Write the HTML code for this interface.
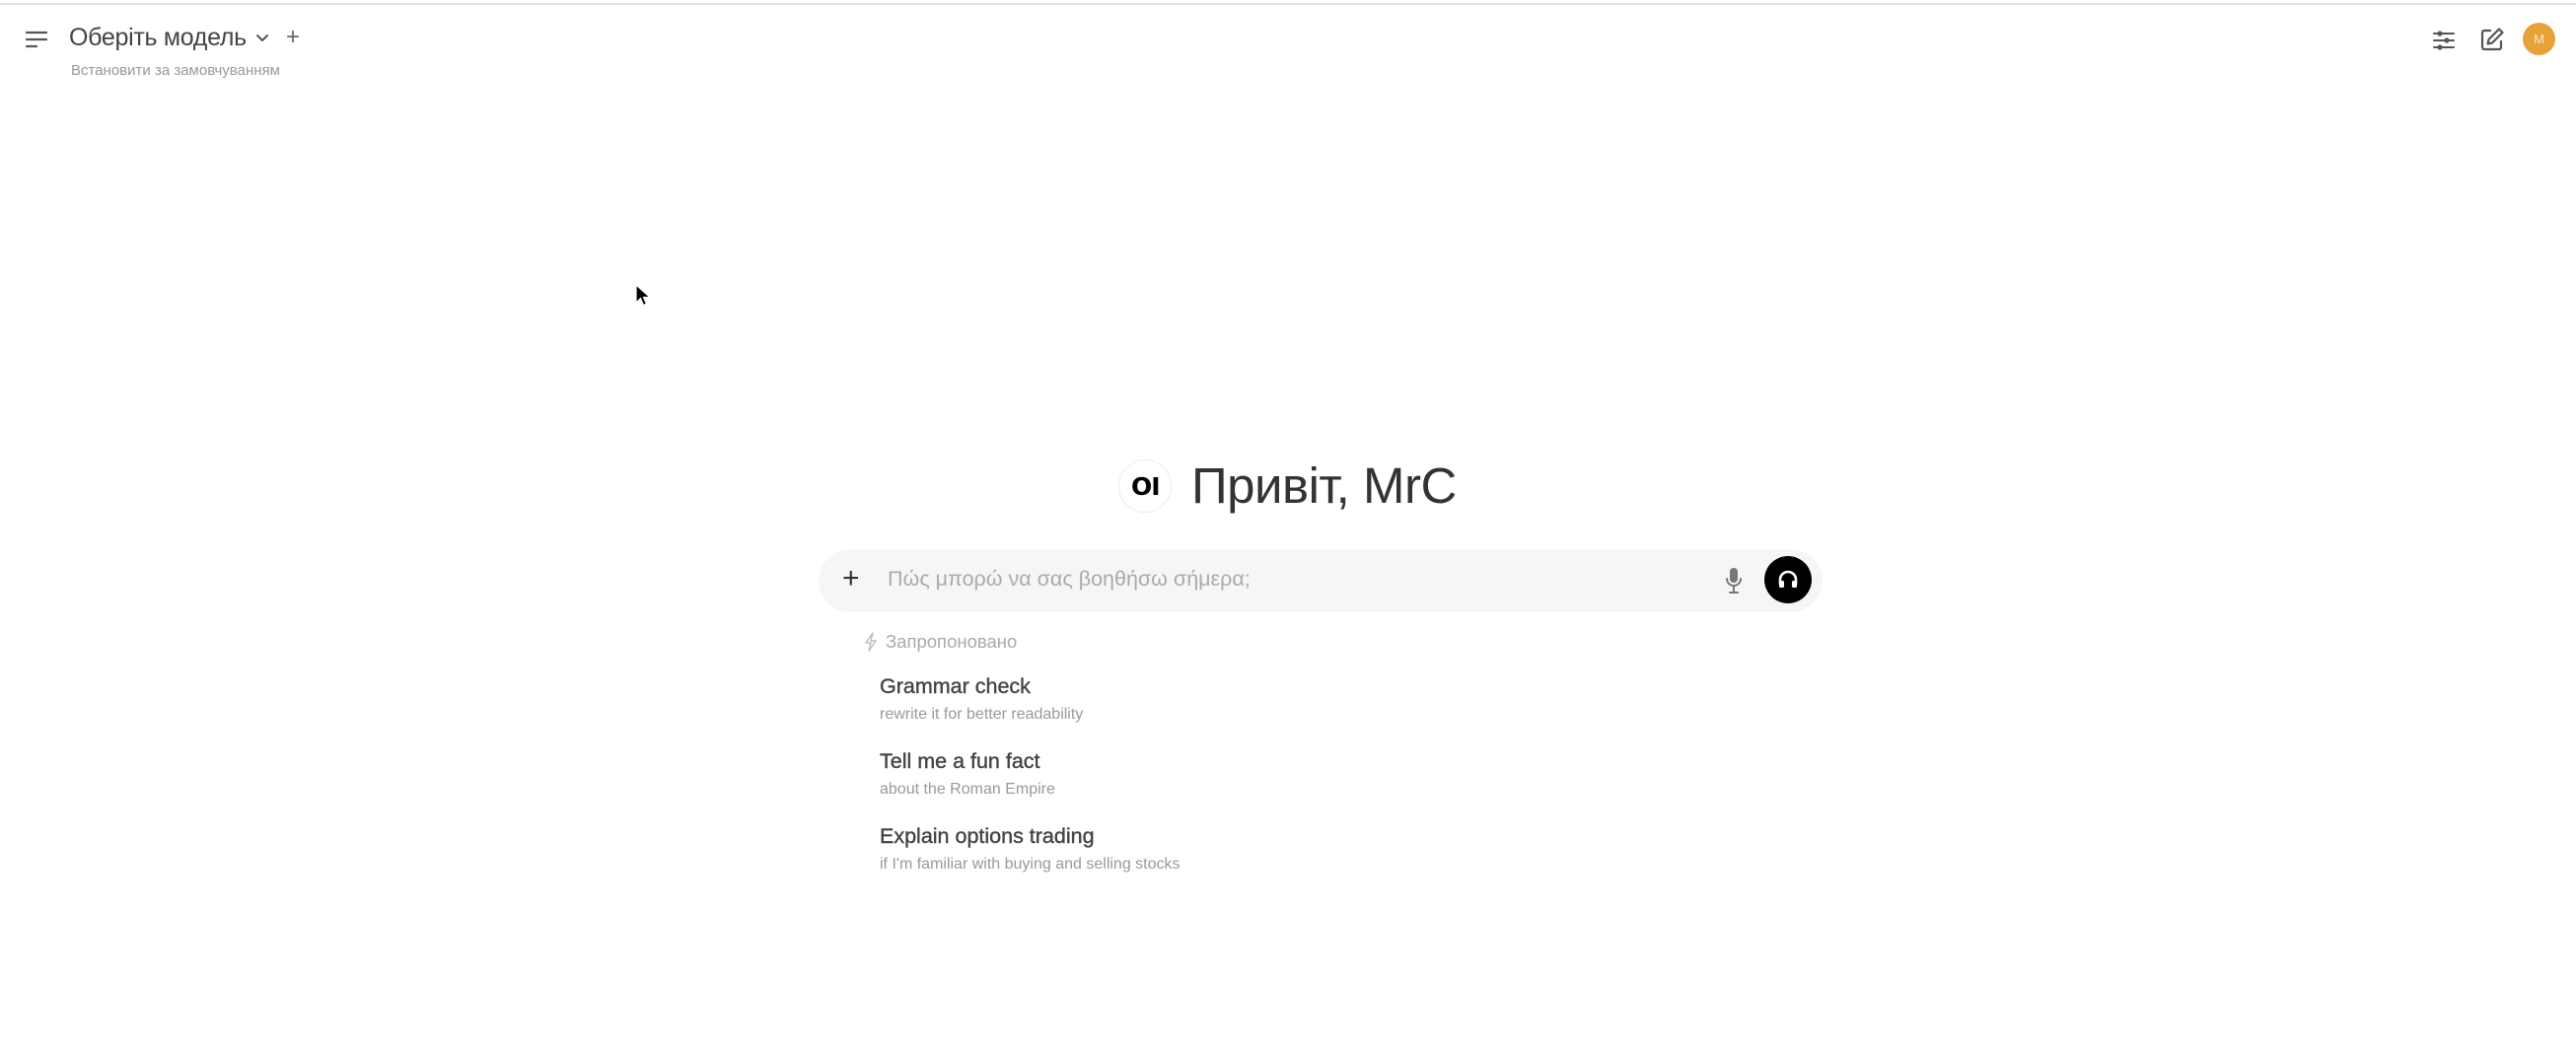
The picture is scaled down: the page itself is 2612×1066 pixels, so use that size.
<!DOCTYPE html>
<html><head><meta charset="utf-8"><style>
*{margin:0;padding:0;box-sizing:border-box}
body{width:2612px;height:1066px;background:#fff;position:relative;overflow:hidden;font-family:"Liberation Sans","DejaVu Sans",sans-serif}
.a{position:absolute}
</style></head><body>
<div class="a" style="left:0;top:3px;width:2612px;height:2px;background:#e3e3e3"></div>
<svg class="a" style="left:25px;top:29px" width="24" height="22" viewBox="0 0 24 22"><g stroke="#555" stroke-width="2.2" stroke-linecap="round"><line x1="2" y1="4" x2="22" y2="4"/><line x1="2" y1="11" x2="22" y2="11"/><line x1="2" y1="18" x2="12" y2="18"/></g></svg>
<div class="a" style="left:70px;top:24px;font-size:25px;color:#444;letter-spacing:-0.3px">Оберіть модель</div>
<svg class="a" style="left:258px;top:33px" width="16" height="12" viewBox="0 0 16 12"><path d="M3 3l5 5 5-5" fill="none" stroke="#555" stroke-width="2" stroke-linecap="round" stroke-linejoin="round"/></svg>
<div class="a" style="left:290px;top:24px;font-size:24px;color:#666">+</div>
<div class="a" style="left:72px;top:63px;font-size:15px;color:#999">Встановити за замовчуванням</div>

<svg class="a" style="left:2465px;top:28px" width="26" height="26" viewBox="0 0 26 26"><g stroke="#555" stroke-width="2" stroke-linecap="round"><line x1="3" y1="6" x2="23" y2="6"/><line x1="3" y1="13" x2="23" y2="13"/><line x1="3" y1="20" x2="23" y2="20"/></g><g fill="#555"><circle cx="9" cy="6" r="2.6"/><circle cx="16" cy="13" r="2.6"/><circle cx="9" cy="20" r="2.6"/></g></svg>
<svg class="a" style="left:2513px;top:26px" width="28" height="28" viewBox="0 0 28 28"><path d="M12 5H6a2 2 0 0 0-2 2v15a2 2 0 0 0 2 2h15a2 2 0 0 0 2-2v-6" fill="none" stroke="#555" stroke-width="2.2" stroke-linecap="round"/><path d="M21 3.5l3.5 3.5L14 17.5l-4.5 1 1-4.5z" fill="none" stroke="#555" stroke-width="2.2" stroke-linejoin="round"/></svg>
<div class="a" style="left:2558px;top:23px;width:33px;height:33px;border-radius:50%;background:#e8a23a;color:#fbe6c8;font-size:13px;text-align:center;line-height:33px">M</div>

<div class="a" style="left:1134px;top:466px;width:54px;height:54px;border-radius:50%;border:1.5px solid #ececec;background:#fff"></div>
<div class="a" style="left:1147px;top:479px;font-size:25px;font-weight:bold;color:#000;letter-spacing:-1px;font-family:'DejaVu Sans',sans-serif">OI</div>
<div class="a" style="left:1208px;top:463px;font-size:51px;color:#333;letter-spacing:-0.5px">Привіт, MrC</div>

<div class="a" style="left:830px;top:557px;width:1018px;height:64px;border-radius:32px;background:#f6f6f6"></div>
<div class="a" style="left:854px;top:570px;font-size:30px;color:#333">+</div>
<div class="a" style="left:900px;top:575px;font-size:21.5px;color:#aaa">Πώς μπορώ να σας βοηθήσω σήμερα;</div>
<svg class="a" style="left:1747px;top:574px" width="22" height="30" viewBox="0 0 22 30"><rect x="7" y="2" width="8" height="15" rx="4" fill="#777"/><path d="M4 13a7 7 0 0 0 14 0M11 20v6M7 27h8" fill="none" stroke="#777" stroke-width="2" stroke-linecap="round"/></svg>
<div class="a" style="left:1789px;top:564px;width:48px;height:48px;border-radius:50%;background:#000"></div>
<svg class="a" style="left:1800px;top:575px" width="26" height="26" viewBox="0 0 26 26"><path d="M5 18v-5a8 8 0 0 1 16 0v5" fill="none" stroke="#fff" stroke-width="2.6"/><rect x="4" y="14" width="5" height="7" rx="1.5" fill="#fff"/><rect x="17" y="14" width="5" height="7" rx="1.5" fill="#fff"/></svg>

<svg class="a" style="left:876px;top:641px" width="14" height="20" viewBox="0 0 14 20"><path d="M9 1L2 11h5l-2 8 7-10H7z" fill="none" stroke="#bbb" stroke-width="1.4" stroke-linejoin="round"/></svg>
<div class="a" style="left:898px;top:640px;font-size:18.5px;color:#aaa">Запропоновано</div>

<div class="a" style="left:892px;top:684px;font-size:21.5px;color:#444;-webkit-text-stroke:0.4px #444">Grammar check</div>
<div class="a" style="left:892px;top:716px;font-size:16px;color:#999">rewrite it for better readability</div>
<div class="a" style="left:892px;top:760px;font-size:21.5px;color:#444;-webkit-text-stroke:0.4px #444">Tell me a fun fact</div>
<div class="a" style="left:892px;top:792px;font-size:16px;color:#999">about the Roman Empire</div>
<div class="a" style="left:892px;top:836px;font-size:21.5px;color:#444;-webkit-text-stroke:0.4px #444">Explain options trading</div>
<div class="a" style="left:892px;top:868px;font-size:16px;color:#999">if I'm familiar with buying and selling stocks</div>

<svg class="a" style="left:644px;top:288px" width="16" height="24" viewBox="0 0 16 24"><path d="M1 1v18l4.5-4.5 3 7 3-1.3-3-6.7H15z" fill="#000" stroke="#fff" stroke-width="1.2"/></svg>
</body></html>
